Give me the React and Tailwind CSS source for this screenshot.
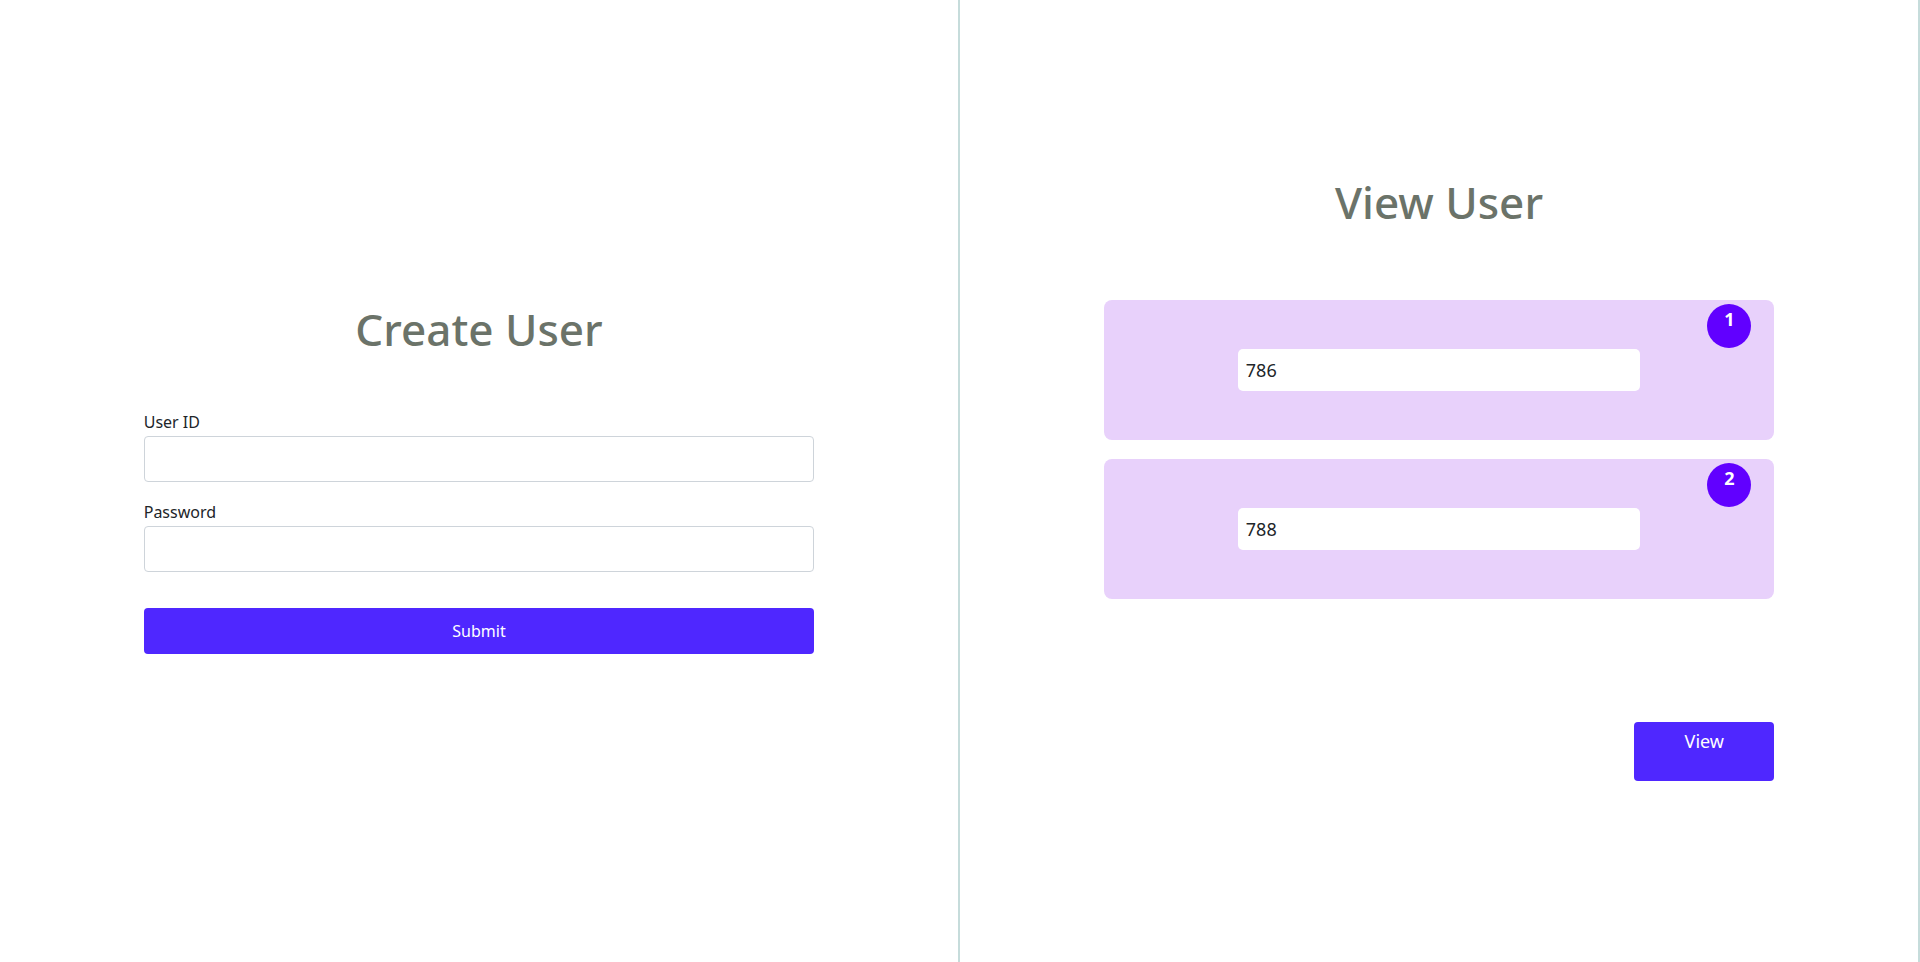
import { useState } from "react";

const UserCard = ({ index, value }) => {
  return (
    <div className="relative flex h-[140px] w-full items-center justify-center rounded-lg bg-[#e8d1fb]">
      {/* Number badge */}
      <div className="absolute right-[23px] top-[4px] h-[44px] w-[44px] rounded-full bg-[#6100ff] pt-[2px] text-center text-[18px] font-bold leading-[27px] text-white">
        {index}
      </div>
      <input
        type="text"
        defaultValue={value}
        className="h-[42px] w-[60%] rounded-[5px] bg-white px-2 text-[18px] text-[#212529] outline-none"
      />
    </div>
  );
};

const App = () => {
  const [userId, setUserId] = useState("");
  const [password, setPassword] = useState("");

  return (
    <div
      className="flex h-[962px] w-full bg-white"
      style={{ fontFamily: '"Noto Sans", "Open Sans", sans-serif' }}
    >
      {/* Create User */}
      <div className="flex w-1/2 flex-col items-center justify-center border-r-2 border-[#c6dcdb] pb-[5px]">
        <h1 className="mb-[55px] text-[44px] font-medium leading-[1.2] text-[#6b7369]">
          Create User
        </h1>

        <form className="w-[70%]" onSubmit={(e) => e.preventDefault()}>
          {/* User ID */}
          <div className="mb-[18px]">
            <label className="mb-[2px] block text-base leading-6 text-[#212529]">
              User ID
            </label>
            <input
              type="text"
              value={userId}
              onChange={(e) => setUserId(e.target.value)}
              className="block h-[46px] w-full rounded-[4px] border border-[#ced4da] px-3 outline-none"
            />
          </div>

          {/* Password */}
          <div>
            <label className="mb-[2px] block text-base leading-6 text-[#212529]">
              Password
            </label>
            <input
              type="password"
              value={password}
              onChange={(e) => setPassword(e.target.value)}
              className="block h-[46px] w-full rounded-[4px] border border-[#ced4da] px-3 outline-none"
            />
          </div>

          {/* Submit */}
          <button
            type="submit"
            className="mt-[36px] h-[46px] w-full rounded-[4px] bg-[#4f27ff] text-base text-white"
          >
            Submit
          </button>
        </form>
      </div>

      {/* View User */}
      <div className="flex w-1/2 flex-col items-center justify-center border-r-2 border-[#c6dcdb] pb-[5px]">
        <h1 className="mb-[72px] text-[44px] font-medium leading-[1.2] text-[#6b7369]">
          View User
        </h1>

        <div className="flex w-[70%] flex-col gap-[19px]">
          <UserCard index={1} value="786" />
          <UserCard index={2} value="788" />
        </div>

        <div className="mt-[123px] flex w-[70%] justify-end">
          <button className="flex h-[59px] w-[140px] items-start justify-center rounded-[4px] bg-[#4f27ff] pt-[6px] text-[18px] leading-[27px] text-white">
            View
          </button>
        </div>
      </div>
    </div>
  );
};

export default App;
